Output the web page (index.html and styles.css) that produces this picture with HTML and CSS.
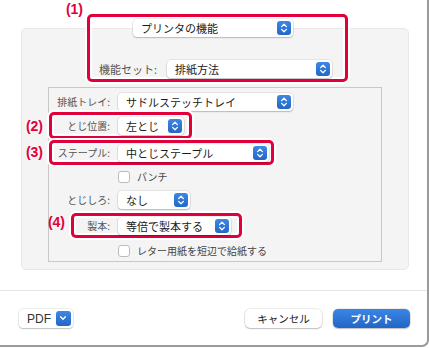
FILE: index.html
```html
<!DOCTYPE html>
<html lang="ja">

<head>
    <meta charset="UTF-8">
    <meta name="viewport" content="width=device-width, initial-scale=1.0">
    <title>プリント</title>
    <link rel="stylesheet" href="styles.css">
</head>

<body>
    <div class="window">
        <div class="settings">
            <div class="panel">
                <div class="feature-group marked">
                    <span class="note note-1">(1)</span>
                    <div class="popup features-popup">
                        <span>プリンタの機能</span>
                        <span class="stepper"><svg width="14" height="14" viewBox="0 0 14 14"><path d="M4.6 5.6 7 3.2l2.4 2.4M4.6 8.4 7 10.8l2.4-2.4" fill="none" stroke="#fff" stroke-width="1.3" stroke-linecap="round" stroke-linejoin="round"/></svg></span>
                    </div>
                    <div class="preset-row">
                        <span class="label">機能セット:</span>
                        <div class="popup preset-popup">
                            <span>排紙方法</span>
                            <span class="stepper"><svg width="14" height="14" viewBox="0 0 14 14"><path d="M4.6 5.6 7 3.2l2.4 2.4M4.6 8.4 7 10.8l2.4-2.4" fill="none" stroke="#fff" stroke-width="1.3" stroke-linecap="round" stroke-linejoin="round"/></svg></span>
                        </div>
                    </div>
                </div>

                <div class="options">
                    <div class="row row-tray">
                        <span class="label">排紙トレイ:</span>
                        <div class="popup tray-popup">
                            <span>サドルステッチトレイ</span>
                            <span class="stepper"><svg width="14" height="14" viewBox="0 0 14 14"><path d="M4.6 5.6 7 3.2l2.4 2.4M4.6 8.4 7 10.8l2.4-2.4" fill="none" stroke="#fff" stroke-width="1.3" stroke-linecap="round" stroke-linejoin="round"/></svg></span>
                        </div>
                    </div>

                    <div class="row row-side marked">
                        <span class="note note-2">(2)</span>
                        <span class="label">とじ位置:</span>
                        <div class="popup side-popup">
                            <span>左とじ</span>
                            <span class="stepper"><svg width="14" height="14" viewBox="0 0 14 14"><path d="M4.6 5.6 7 3.2l2.4 2.4M4.6 8.4 7 10.8l2.4-2.4" fill="none" stroke="#fff" stroke-width="1.3" stroke-linecap="round" stroke-linejoin="round"/></svg></span>
                        </div>
                    </div>

                    <div class="row row-staple marked">
                        <span class="note note-3">(3)</span>
                        <span class="label">ステープル:</span>
                        <div class="popup staple-popup">
                            <span>中とじステープル</span>
                            <span class="stepper"><svg width="14" height="14" viewBox="0 0 14 14"><path d="M4.6 5.6 7 3.2l2.4 2.4M4.6 8.4 7 10.8l2.4-2.4" fill="none" stroke="#fff" stroke-width="1.3" stroke-linecap="round" stroke-linejoin="round"/></svg></span>
                        </div>
                    </div>

                    <div class="row check-row row-punch">
                        <span class="check-box"></span>
                        <span class="check-text">パンチ</span>
                    </div>

                    <div class="row row-margin">
                        <span class="label">とじしろ:</span>
                        <div class="popup margin-popup">
                            <span>なし</span>
                            <span class="stepper"><svg width="14" height="14" viewBox="0 0 14 14"><path d="M4.6 5.6 7 3.2l2.4 2.4M4.6 8.4 7 10.8l2.4-2.4" fill="none" stroke="#fff" stroke-width="1.3" stroke-linecap="round" stroke-linejoin="round"/></svg></span>
                        </div>
                    </div>

                    <div class="row row-booklet marked">
                        <span class="note note-4">(4)</span>
                        <span class="label">製本:</span>
                        <div class="popup booklet-popup">
                            <span>等倍で製本する</span>
                            <span class="stepper"><svg width="14" height="14" viewBox="0 0 14 14"><path d="M4.6 5.6 7 3.2l2.4 2.4M4.6 8.4 7 10.8l2.4-2.4" fill="none" stroke="#fff" stroke-width="1.3" stroke-linecap="round" stroke-linejoin="round"/></svg></span>
                        </div>
                    </div>

                    <div class="row check-row row-letter">
                        <span class="check-box"></span>
                        <span class="check-text">レター用紙を短辺で給紙する</span>
                    </div>
                </div>
            </div>
        </div>

        <div class="footer">
            <div class="popup pdf-button">
                <span>PDF</span>
                <span class="stepper"><svg width="14" height="14" viewBox="0 0 14 14"><path d="M4.6 5.8 7 8.2l2.4-2.4" fill="none" stroke="#fff" stroke-width="1.4" stroke-linecap="round" stroke-linejoin="round"/></svg></span>
            </div>
            <div class="footer-actions">
                <button class="btn">キャンセル</button>
                <button class="btn btn-primary">プリント</button>
            </div>
        </div>
    </div>
</body>

</html>
```

FILE: styles.css
```css
body {
    margin: 0;
    background-color: #fff;
    font-family: "Noto Sans CJK JP", "Noto Sans", sans-serif;
    color: #222;
}

.window {
    box-sizing: border-box;
    width: 429px;
    height: 347px;
    border-right: 2px solid #9a9a9a;
    border-bottom: 2px solid #9a9a9a;
    border-bottom-right-radius: 7px;
    overflow: hidden;
}

.settings {
    box-sizing: border-box;
    height: 291px;
    padding: 28px 0 0 21px;
    border-bottom: 1px solid #e4e4e4;
}

.panel {
    box-sizing: border-box;
    width: 388px;
    height: 242px;
    background-color: #f4f4f4;
    border: 1px solid #e8e8e8;
    border-radius: 5px;
}

/* red callout frames */
.marked {
    position: relative;
    border-radius: 5px;
    box-shadow: inset 0 0 0 3px #e2003b, inset 0 0 0 5px #fff, 0 0 0 2px #fff;
}

.note {
    position: absolute;
    right: calc(100% + 6px);
    color: #e2003b;
    font: bold 14px/14px "Liberation Sans", Arial, sans-serif;
    white-space: nowrap;
}

.note-1 {
    right: calc(100% + 4px);
    top: -12px;
}

.note-2 {
    top: 7px;
}

.note-3 {
    top: 5px;
}

.note-4 {
    top: 2px;
}

.feature-group {
    box-sizing: border-box;
    width: 261px;
    height: 68px;
    margin: -15px 0 0 65px;
    padding-top: 5px;
}

.popup {
    box-sizing: border-box;
    height: 18px;
    display: flex;
    align-items: center;
    justify-content: space-between;
    padding: 0 2px 0 8px;
    background-color: #fff;
    border-radius: 4px;
    box-shadow: 0 0 0 0.5px rgba(0, 0, 0, 0.12), 0 1px 1.5px rgba(0, 0, 0, 0.2);
    font-size: 11px;
    line-height: 18px;
    color: #1a1a1a;
    white-space: nowrap;
}

.stepper {
    display: flex;
    width: 14px;
    height: 14px;
    border-radius: 3px;
    background: linear-gradient(#3d88e4, #2467c7);
}

.features-popup {
    width: 160px;
    margin-left: 46px;
}

.preset-row {
    display: flex;
    align-items: center;
    margin: 23px 0 0 12px;
}

.preset-row .label {
    width: 68px;
    text-align: left;
    font-size: 11px;
}

.preset-popup {
    width: 165px;
}

.options {
    box-sizing: border-box;
    width: 334px;
    height: 175px;
    margin: 5px 0 0 26px;
    border: 1px solid #c8c8c8;
}

.row {
    display: flex;
    align-items: center;
}

.label {
    box-sizing: border-box;
    width: 64px;
    padding-right: 3px;
    text-align: right;
    font-size: 10px;
    line-height: 14px;
    color: #555;
    white-space: nowrap;
}

.row .popup {
    margin-left: 5px;
}

.row-tray {
    margin-top: 5px;
    height: 18px;
}

.tray-popup {
    width: 175px;
}

.row-side {
    margin-top: 1px;
    height: 27px;
    width: 143px;
}

.side-popup {
    width: 66px;
}

.row-staple {
    margin-top: 1px;
    height: 25px;
    width: 225px;
}

.staple-popup {
    width: 151px;
}

.check-row {
    padding-left: 69px;
}

.row-punch {
    height: 24px;
}

.row-margin {
    height: 22px;
}

.margin-popup {
    width: 72px;
}

.row-booklet {
    margin: 2px 0 0 22px;
    height: 25px;
    width: 171px;
}

.row-booklet .label {
    width: 42px;
}

.booklet-popup {
    width: 113px;
}

.row-letter {
    margin-top: 2px;
    height: 21px;
}

.check-box {
    box-sizing: border-box;
    width: 12px;
    height: 12px;
    margin-right: 7px;
    background-color: #fff;
    border: 1px solid #bcbcbc;
    border-radius: 3px;
}

.check-text {
    font-size: 10px;
    line-height: 14px;
    color: #444;
}

.footer {
    display: flex;
    justify-content: space-between;
    align-items: center;
    padding: 18px 17px 0 19px;
}

.pdf-button {
    width: 54px;
    height: 19px;
    font-family: "Liberation Sans", Arial, sans-serif;
    font-size: 12px;
    color: #333;
}

.pdf-button .stepper {
    width: 15px;
    height: 15px;
}

.footer-actions {
    display: flex;
    gap: 11px;
}

.btn {
    width: 77px;
    height: 19px;
    padding: 0;
    border: none;
    border-radius: 5px;
    background-color: #fff;
    box-shadow: 0 0 0 0.5px rgba(0, 0, 0, 0.15), 0 1px 1.5px rgba(0, 0, 0, 0.2);
    font-family: "Noto Sans CJK JP", sans-serif;
    font-size: 10.5px;
    line-height: 19px;
    color: #222;
}

.btn-primary {
    background: linear-gradient(#3a86e4, #2266c6);
    color: #fff;
    font-weight: bold;
}
```
